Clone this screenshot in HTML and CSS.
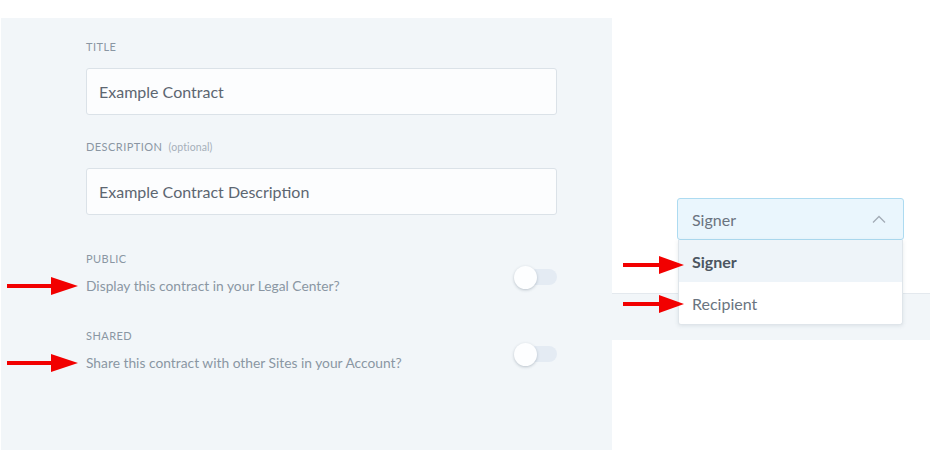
FILE: index.html
```html
<!DOCTYPE html>
<html>
<head>
<meta charset="utf-8">
<link rel="stylesheet" href="styles.css">
</head>
<body>
<div class="page">
  <div class="panel">
    <div class="field">
      <div class="label">Title</div>
      <div class="input">Example Contract</div>
    </div>
    <div class="field field-gap">
      <div class="label">Description <span class="optional">(optional)</span></div>
      <div class="input">Example Contract Description</div>
    </div>
    <div class="toggle-row first">
      <div class="toggle-text">
        <div class="label">Public</div>
        <div class="question">Display this contract in your Legal Center?</div>
      </div>
      <div class="switch"><span class="knob"></span></div>
    </div>
    <div class="toggle-row second">
      <div class="toggle-text">
        <div class="label">Shared</div>
        <div class="question">Share this contract with other Sites in your Account?</div>
      </div>
      <div class="switch"><span class="knob"></span></div>
    </div>
  </div>
  <div class="side">
    <div class="select-wrap">
      <div class="select">
        <span>Signer</span>
        <svg class="chevron" width="14" height="8" viewBox="0 0 14 8"><path d="M1 7.5 L7 1.5 L13 7.5" fill="none" stroke="#a3acb6" stroke-width="1.3"/></svg>
      </div>
      <div class="menu">
        <div class="opt active">Signer</div>
        <div class="opt">Recipient</div>
      </div>
    </div>
    <div class="band"></div>
  </div>
</div>

<svg class="arrow a1" width="72" height="20" viewBox="0 0 72 20"><rect x="0" y="8" width="48" height="4" fill="#f20000"/><polygon points="44,1 71,10 44,19" fill="#f20000"/></svg>
<svg class="arrow a2" width="72" height="20" viewBox="0 0 72 20"><rect x="0" y="8" width="48" height="4" fill="#f20000"/><polygon points="44,1 71,10 44,19" fill="#f20000"/></svg>
<svg class="arrow a3" width="62" height="20" viewBox="0 0 62 20"><rect x="0" y="8" width="40" height="4" fill="#f20000"/><polygon points="36,1 61,10 36,19" fill="#f20000"/></svg>
<svg class="arrow a4" width="62" height="20" viewBox="0 0 62 20"><rect x="0" y="8" width="40" height="4" fill="#f20000"/><polygon points="36,1 61,10 36,19" fill="#f20000"/></svg>
</body>
</html>
```

FILE: styles.css
```css
* { box-sizing: border-box; }
html, body { margin: 0; padding: 0; background: #fff; }
body {
  font-family: Lato, "Open Sans", "Liberation Sans", sans-serif;
  width: 950px;
  height: 450px;
  overflow: hidden;
  position: relative;
}
.page {
  display: flex;
  align-items: flex-start;
}
.panel {
  width: 611px;
  height: 432px;
  margin: 18px 0 0 1px;
  background: #f2f6f9;
  padding: 21px 55px 0 85px;
}
.label {
  font-size: 11px;
  line-height: 16px;
  letter-spacing: 0.45px;
  text-transform: uppercase;
  color: #8a96a3;
}
.optional {
  text-transform: none;
  letter-spacing: 0.1px;
  font-size: 10.5px;
  color: #a6b0ba;
  margin-left: 3px;
}
.input {
  margin-top: 13px;
  height: 47px;
  border: 1px solid #dbe2e8;
  border-radius: 3px;
  background: #fcfdfe;
  padding: 0 12px;
  display: flex;
  align-items: center;
  font-size: 16px;
  color: #5c6671;
}
.field-gap { margin-top: 24px; }
.toggle-row {
  display: flex;
  justify-content: space-between;
  align-items: center;
}
.toggle-row.first { margin-top: 36px; }
.toggle-row.second { margin-top: 32px; }
.question {
  margin-top: 9px;
  font-size: 13.8px;
  line-height: 20px;
  color: #8a96a3;
}
.switch {
  position: relative;
  width: 43px;
  height: 23px;
  margin-top: 7px;
  display: flex;
  align-items: center;
  justify-content: flex-end;
}
.switch::before {
  content: "";
  width: 36px;
  height: 16px;
  border-radius: 8px;
  background: #e4ebf3;
}
.knob {
  position: absolute;
  left: 0;
  top: 0;
  width: 23px;
  height: 23px;
  border-radius: 50%;
  background: #fdfeff;
  box-shadow: 0 1px 3px rgba(60, 80, 100, 0.3);
}
.side {
  width: 318px;
  padding-top: 198px;
}
.select-wrap {
  position: relative;
  margin-left: 65px;
  width: 227px;
  z-index: 2;
}
.select {
  height: 42px;
  border: 1px solid #addbf1;
  border-radius: 3px;
  background: #eaf6fd;
  display: flex;
  align-items: center;
  justify-content: space-between;
  padding: 0 17px 0 14px;
  font-size: 16px;
  color: #6a7480;
}
.chevron { display: block; }
.menu {
  position: absolute;
  left: 1px;
  right: 1px;
  top: 42px;
  background: #fff;
  border: 1px solid #dfe5ea;
  border-top: none;
  border-radius: 0 0 3px 3px;
  box-shadow: 0 1px 4px rgba(60, 80, 100, 0.12);
  overflow: hidden;
}
.opt {
  height: 42px;
  display: flex;
  align-items: center;
  padding-left: 13px;
  font-size: 16px;
  color: #6a7480;
}
.opt.active {
  background: #eef4f9;
  font-weight: 700;
  color: #4c5661;
}
.band {
  margin-top: 53px;
  height: 47px;
  background: #f2f6f9;
  border-top: 1px solid #e4e9ee;
}
.arrow {
  position: absolute;
  z-index: 5;
}
.a1 { left: 7px; top: 276px; }
.a2 { left: 7px; top: 353px; }
.a3 { left: 623px; top: 255px; }
.a4 { left: 623px; top: 294px; }
```
